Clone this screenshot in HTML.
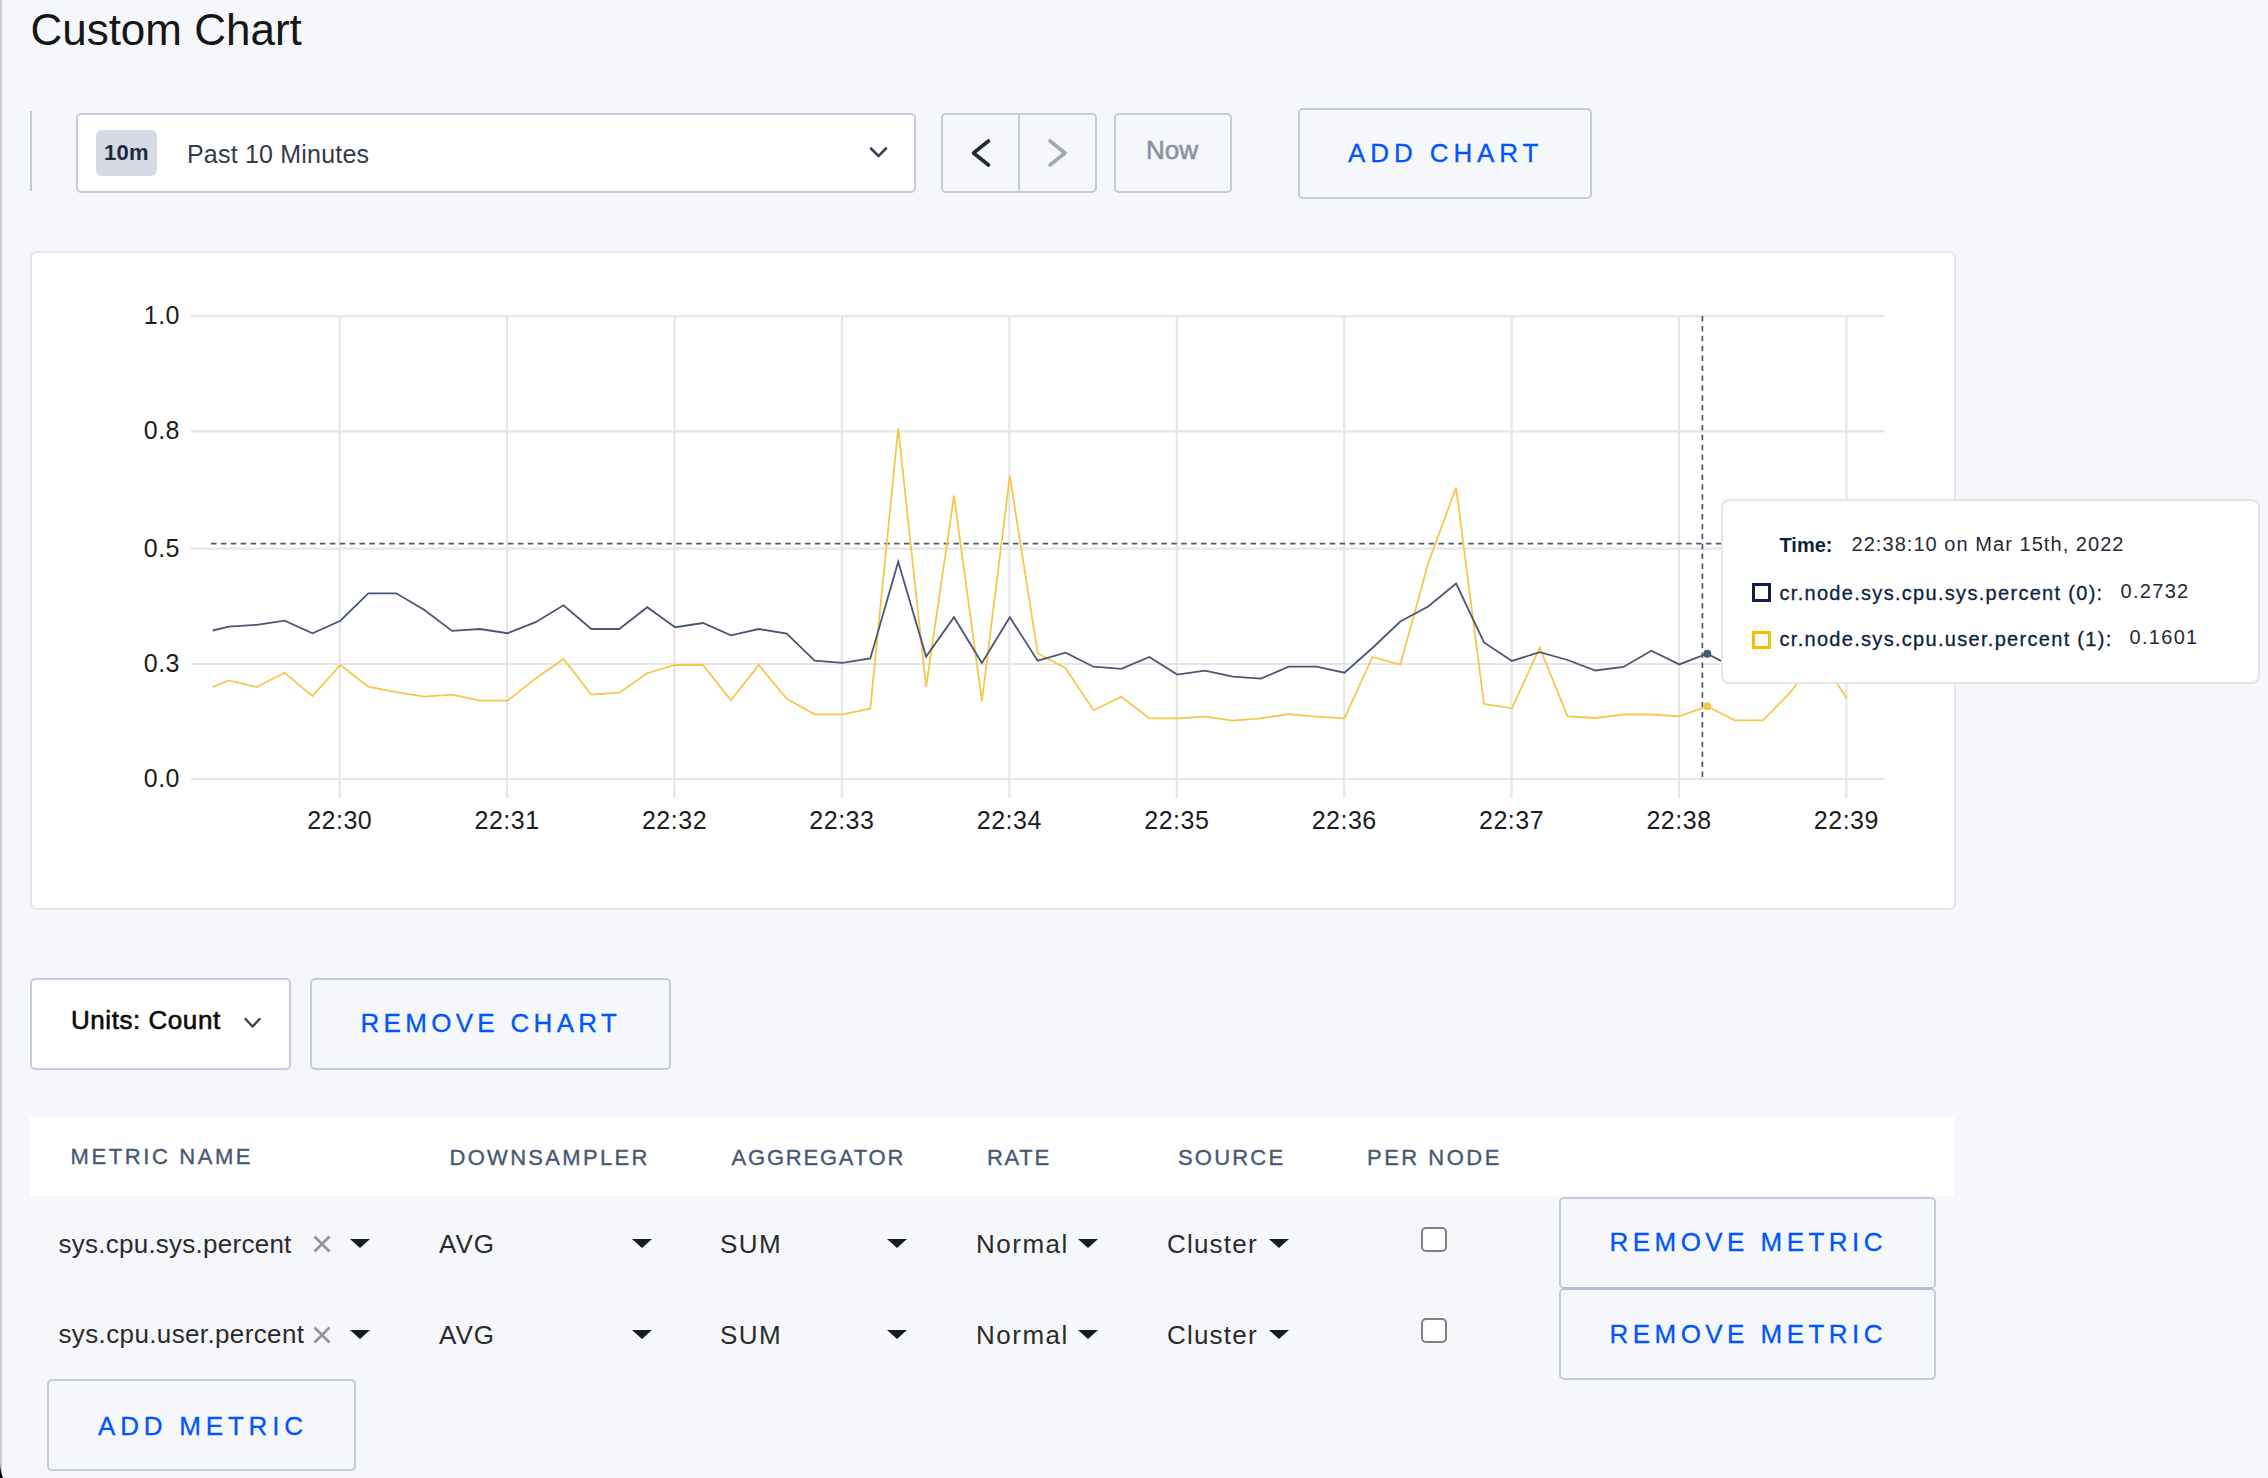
<!DOCTYPE html>
<html><head><meta charset="utf-8">
<style>
html,body{margin:0;padding:0;}
body{width:2268px;height:1478px;overflow:hidden;background:#f5f7fa;position:relative;font-family:"Liberation Sans",sans-serif;}
.a{position:absolute;box-sizing:border-box;}
.t{position:absolute;white-space:nowrap;}
.box{position:absolute;box-sizing:border-box;border:2px solid #c5cbda;border-radius:5px;}
.btxt{position:absolute;white-space:nowrap;color:#0055ff;font-size:26px;line-height:25px;-webkit-text-stroke:0.3px #0055ff;}
.ax{font-family:"Liberation Sans",sans-serif;font-size:25px;fill:#1c1c1c;letter-spacing:0.5px;}
.hd{position:absolute;white-space:nowrap;color:#475872;font-size:22px;line-height:22px;-webkit-text-stroke:0.35px #475872;}
.cell{position:absolute;white-space:nowrap;color:#2b2b2b;font-size:26px;line-height:26px;}
.tri{position:absolute;width:0;height:0;border-left:10px solid transparent;border-right:10px solid transparent;border-top:9px solid #161b27;}
.cb{position:absolute;box-sizing:border-box;width:26px;height:25px;border:2px solid #808080;border-radius:5px;background:#fff;}
</style></head>
<body>
<div class="a" style="left:0;top:0;width:1.5px;height:1478px;background:#cdd0d5;"></div>
<svg class="a" style="left:0;top:0;" width="10" height="1478"><path d="M0,1462 L0.00,1462 L0.01,1463 L0.05,1464 L0.10,1465 L0.18,1466 L0.29,1467 L0.41,1468 L0.56,1469 L0.73,1470 L0.93,1471 L1.15,1472 L1.40,1473 L1.67,1474 L1.96,1475 L2.29,1476 L2.64,1477 L3.01,1478 L0,1478 Z" fill="#000"/></svg>

<div class="t" style="left:30.4px;top:8.4px;font-size:44px;line-height:44px;color:#161616;">Custom Chart</div>

<!-- time selector -->
<div class="a" style="left:30px;top:111px;width:2px;height:80px;background:#c5cbda;"></div>
<div class="box" style="left:75.5px;top:113.4px;width:840.5px;height:79.6px;background:#fff;"></div>
<div class="a" style="left:96px;top:130px;width:61px;height:46px;background:#d6dbe5;border-radius:6px;"></div>
<div class="t" style="left:104px;top:141.9px;font-size:22px;line-height:22px;font-weight:bold;color:#1f2a3d;letter-spacing:0.3px;">10m</div>
<div class="t" style="left:187px;top:141.8px;font-size:25px;line-height:25px;color:#333b48;letter-spacing:0.2px;">Past 10 Minutes</div>

<!-- nav group -->
<div class="box" style="left:940.5px;top:113.4px;width:156.5px;height:79.6px;"></div>
<div class="a" style="left:1018px;top:113.4px;width:2px;height:79.6px;background:#c5cbda;"></div>
<div class="box" style="left:1113.5px;top:113.4px;width:118.5px;height:79.6px;"></div>
<div class="t" style="left:1146px;top:137.0px;font-size:26px;line-height:26px;color:#8a91a0;-webkit-text-stroke:0.55px #8a91a0;">Now</div>
<div class="box" style="left:1298.2px;top:107.5px;width:294px;height:91.4px;"></div>
<div class="btxt" style="left:1348px;top:141.0px;letter-spacing:4.9px;">ADD CHART</div>

<!-- chart card -->
<div class="a" style="left:30px;top:251px;width:1926px;height:659px;background:#fff;border:2px solid #e6e6e6;border-radius:7px;"></div>

<!-- controls row -->
<div class="box" style="left:29.8px;top:978px;width:261.5px;height:91.7px;background:#fff;"></div>
<div class="t" style="left:71px;top:1007.4px;font-size:26px;line-height:26px;color:#0b0b0b;-webkit-text-stroke:0.6px #0b0b0b;letter-spacing:0.55px;">Units: Count</div>
<div class="box" style="left:310.3px;top:978px;width:361px;height:91.7px;"></div>
<div class="btxt" style="left:360.5px;top:1011.2px;letter-spacing:4.3px;">REMOVE CHART</div>

<!-- table header -->
<div class="a" style="left:30px;top:1117.3px;width:1924px;height:79px;background:#fff;"></div>
<div class="hd" style="left:70.5px;top:1146.4px;letter-spacing:2.6px;">METRIC NAME</div>
<div class="hd" style="left:449.5px;top:1146.9px;letter-spacing:2.3px;">DOWNSAMPLER</div>
<div class="hd" style="left:731.5px;top:1146.9px;letter-spacing:1.8px;">AGGREGATOR</div>
<div class="hd" style="left:987px;top:1146.9px;letter-spacing:1.7px;">RATE</div>
<div class="hd" style="left:1178px;top:1146.9px;letter-spacing:2.2px;">SOURCE</div>
<div class="hd" style="left:1367px;top:1146.9px;letter-spacing:2.5px;">PER NODE</div>

<div class="cell" style="left:58.5px;top:1231.0px;letter-spacing:0.25px;">sys.cpu.sys.percent</div>
<svg class="a" style="left:311.3px;top:1234.0px;" width="22" height="20"><path d="M3.5 2.5 L18.5 17.5 M18.5 2.5 L3.5 17.5" stroke="#939393" stroke-width="2.6" fill="none"/></svg>
<div class="tri" style="left:350px;top:1238.6px;"></div>
<div class="cell" style="left:439px;top:1231.0px;letter-spacing:1px;">AVG</div>
<div class="tri" style="left:631.5px;top:1238.8px;"></div>
<div class="cell" style="left:720px;top:1231.0px;letter-spacing:1.5px;">SUM</div>
<div class="tri" style="left:886.5px;top:1238.8px;"></div>
<div class="cell" style="left:976px;top:1231.0px;letter-spacing:1.5px;">Normal</div>
<div class="tri" style="left:1077.5px;top:1238.6px;"></div>
<div class="cell" style="left:1167px;top:1231.0px;letter-spacing:1.2px;">Cluster</div>
<div class="tri" style="left:1268.5px;top:1238.6px;"></div>
<div class="cb" style="left:1421px;top:1226.6px;"></div>
<div class="box" style="left:1559px;top:1197.0px;width:377px;height:91.6px;"></div>
<div class="btxt" style="left:1609.5px;top:1230.2px;letter-spacing:4.45px;">REMOVE METRIC</div>

<div class="cell" style="left:58.5px;top:1321.1px;letter-spacing:0.37px;">sys.cpu.user.percent</div>
<svg class="a" style="left:311.3px;top:1325.3px;" width="22" height="20"><path d="M3.5 2.5 L18.5 17.5 M18.5 2.5 L3.5 17.5" stroke="#939393" stroke-width="2.6" fill="none"/></svg>
<div class="tri" style="left:350px;top:1329.9px;"></div>
<div class="cell" style="left:439px;top:1322.3px;letter-spacing:1px;">AVG</div>
<div class="tri" style="left:631.5px;top:1330.1px;"></div>
<div class="cell" style="left:720px;top:1322.3px;letter-spacing:1.5px;">SUM</div>
<div class="tri" style="left:886.5px;top:1330.1px;"></div>
<div class="cell" style="left:976px;top:1322.3px;letter-spacing:1.5px;">Normal</div>
<div class="tri" style="left:1077.5px;top:1329.9px;"></div>
<div class="cell" style="left:1167px;top:1322.3px;letter-spacing:1.2px;">Cluster</div>
<div class="tri" style="left:1268.5px;top:1329.9px;"></div>
<div class="cb" style="left:1421px;top:1317.9px;"></div>
<div class="box" style="left:1559px;top:1287.6px;width:377px;height:92.1px;"></div>
<div class="btxt" style="left:1609.5px;top:1321.5px;letter-spacing:4.45px;">REMOVE METRIC</div>

<div class="a" style="left:1563px;top:1286.6px;width:369px;height:3px;background:#b9bfd0;"></div>
<div class="box" style="left:47.3px;top:1379.3px;width:308.6px;height:91.9px;"></div>
<div class="btxt" style="left:98px;top:1413.6px;letter-spacing:4.8px;">ADD METRIC</div>

<svg class="a" style="left:0;top:0;pointer-events:none;" width="2268" height="1478">
<!-- chevrons -->
<polyline points="871,148.5 878.5,156 886,148.5" fill="none" stroke="#394455" stroke-width="2.6" stroke-linecap="round" stroke-linejoin="round"/>
<polyline points="988.5,141 973.5,153 988.5,165" fill="none" stroke="#242a35" stroke-width="3.6" stroke-linecap="round" stroke-linejoin="round"/>
<polyline points="1050,141 1065,153 1050,165" fill="none" stroke="#a3a9b3" stroke-width="3.6" stroke-linecap="round" stroke-linejoin="round"/>
<polyline points="245.5,1019 252.5,1026.5 259.5,1019" fill="none" stroke="#394455" stroke-width="2.4" stroke-linecap="round" stroke-linejoin="round"/>
<line x1="191" y1="316.2" x2="1884" y2="316.2" stroke="#e6e6e6" stroke-width="2.2"/>
<line x1="191" y1="431.4" x2="1884" y2="431.4" stroke="#e6e6e6" stroke-width="2.2"/>
<line x1="191" y1="548.6" x2="1884" y2="548.6" stroke="#e6e6e6" stroke-width="2.2"/>
<line x1="191" y1="664.0" x2="1884" y2="664.0" stroke="#e6e6e6" stroke-width="2.2"/>
<line x1="191" y1="779.0" x2="1884" y2="779.0" stroke="#e6e6e6" stroke-width="2.2"/>
<line x1="339.7" y1="316" x2="339.7" y2="798" stroke="#e6e6e6" stroke-width="2.2"/>
<line x1="507.1" y1="316" x2="507.1" y2="798" stroke="#e6e6e6" stroke-width="2.2"/>
<line x1="674.5" y1="316" x2="674.5" y2="798" stroke="#e6e6e6" stroke-width="2.2"/>
<line x1="841.9" y1="316" x2="841.9" y2="798" stroke="#e6e6e6" stroke-width="2.2"/>
<line x1="1009.3" y1="316" x2="1009.3" y2="798" stroke="#e6e6e6" stroke-width="2.2"/>
<line x1="1176.8" y1="316" x2="1176.8" y2="798" stroke="#e6e6e6" stroke-width="2.2"/>
<line x1="1344.2" y1="316" x2="1344.2" y2="798" stroke="#e6e6e6" stroke-width="2.2"/>
<line x1="1511.6" y1="316" x2="1511.6" y2="798" stroke="#e6e6e6" stroke-width="2.2"/>
<line x1="1679.0" y1="316" x2="1679.0" y2="798" stroke="#e6e6e6" stroke-width="2.2"/>
<line x1="1846.4" y1="316" x2="1846.4" y2="798" stroke="#e6e6e6" stroke-width="2.2"/>
<text x="180" y="324.2" text-anchor="end" class="ax">1.0</text>
<text x="180" y="439.4" text-anchor="end" class="ax">0.8</text>
<text x="180" y="556.6" text-anchor="end" class="ax">0.5</text>
<text x="180" y="672.0" text-anchor="end" class="ax">0.3</text>
<text x="180" y="787.0" text-anchor="end" class="ax">0.0</text>
<text x="339.7" y="828.6" text-anchor="middle" class="ax">22:30</text>
<text x="507.1" y="828.6" text-anchor="middle" class="ax">22:31</text>
<text x="674.5" y="828.6" text-anchor="middle" class="ax">22:32</text>
<text x="841.9" y="828.6" text-anchor="middle" class="ax">22:33</text>
<text x="1009.3" y="828.6" text-anchor="middle" class="ax">22:34</text>
<text x="1176.8" y="828.6" text-anchor="middle" class="ax">22:35</text>
<text x="1344.2" y="828.6" text-anchor="middle" class="ax">22:36</text>
<text x="1511.6" y="828.6" text-anchor="middle" class="ax">22:37</text>
<text x="1679.0" y="828.6" text-anchor="middle" class="ax">22:38</text>
<text x="1846.4" y="828.6" text-anchor="middle" class="ax">22:39</text>
<line x1="211" y1="543.7" x2="1884" y2="543.7" stroke="#4a5a74" stroke-width="1.7" stroke-dasharray="5.5,4.4"/>
<line x1="1702.4" y1="316" x2="1702.4" y2="779" stroke="#4a5a74" stroke-width="1.7" stroke-dasharray="5.5,4.4"/>
<polyline points="212.7,687.1 228.8,680.4 256.7,687.1 284.6,672.7 312.5,696.1 340.4,665 368.3,686.7 396.2,692.2 424.1,696.7 452.0,694.6 479.9,700.6 507.7,700.6 535.6,678.4 563.5,659 591.4,694.6 619.3,692.7 647.2,673.2 675.1,665 703.0,665 730.9,700.2 758.8,665 786.7,698.7 814.6,714.4 842.4,714.4 870.3,708.7 898.2,428.3 926.1,686.9 954.0,495.7 981.9,701.2 1009.8,476 1037.7,653.2 1065.6,668.2 1093.5,710.2 1121.4,696.7 1149.3,718.4 1177.2,718.4 1205.0,716.6 1232.9,720.7 1260.8,718.4 1288.7,714.2 1316.6,716.6 1344.5,718.4 1372.4,657 1400.3,664.7 1428.2,563.2 1456.1,487.6 1484.0,704 1511.9,708.3 1539.7,647.7 1567.6,716.3 1595.5,718 1623.4,714.5 1651.3,714.5 1679.2,716.3 1707.1,706.3 1735.0,720.3 1762.9,720.3 1790.8,692 1818.7,654 1846.6,698.3" fill="none" stroke="#f5c84c" stroke-width="1.8" stroke-linejoin="miter"/>
<polyline points="212.7,630.5 228.8,626.7 256.7,624.8 284.6,620.7 312.5,633.2 340.4,620.7 368.3,593.3 396.2,593.3 424.1,609.8 452.0,630.9 479.9,629 507.7,633.2 535.6,622.2 563.5,605.3 591.4,629 619.3,629 647.2,607.2 675.1,627.2 703.0,623 730.9,635.3 758.8,629 786.7,633.5 814.6,660.7 842.4,662.9 870.3,658.4 898.2,561.7 926.1,656.6 954.0,617.2 981.9,662.9 1009.8,617.2 1037.7,660.7 1065.6,652.7 1093.5,666.7 1121.4,668.9 1149.3,657 1177.2,674.6 1205.0,670.7 1232.9,676.7 1260.8,678.7 1288.7,666.7 1316.6,666.7 1344.5,672.7 1372.4,648 1400.3,621.5 1428.2,606.5 1456.1,583.5 1484.0,642.4 1511.9,660.9 1539.7,652.1 1567.6,660 1595.5,670.5 1623.4,667 1651.3,650.8 1679.2,664.4 1707.1,653.7 1735.0,668 1762.9,662 1790.8,658 1818.7,664 1846.6,660" fill="none" stroke="#4a5872" stroke-width="1.8" stroke-linejoin="miter"/>
<circle cx="1707.3" cy="653.7" r="4" fill="#475872"/>
<circle cx="1707.3" cy="706.3" r="4" fill="#f5c84c"/>
</svg>

<!-- tooltip -->
<div class="a" style="left:1721px;top:498.8px;width:539px;height:185.2px;background:#fff;border:2px solid #e4e4e4;border-radius:8px;"></div>
<div class="t" style="left:1779.5px;top:535.3px;font-size:20px;line-height:20px;font-weight:bold;color:#0c1f3d;">Time:</div>
<div class="t" style="left:1851.5px;top:533.5px;font-size:20px;line-height:20px;color:#242a35;letter-spacing:1.05px;">22:38:10 on Mar 15th, 2022</div>
<div class="a" style="left:1752px;top:583.4px;width:18.5px;height:18.5px;border:3px solid #0e1e45;"></div>
<div class="t" style="left:1779.5px;top:582.7px;font-size:20px;line-height:20px;color:#0c1f3d;letter-spacing:1.3px;-webkit-text-stroke:0.3px #0c1f3d;">cr.node.sys.cpu.sys.percent (0):</div>
<div class="t" style="left:2120.5px;top:581.1px;font-size:20px;line-height:20px;color:#242a35;letter-spacing:1.3px;">0.2732</div>
<div class="a" style="left:1752px;top:630.7px;width:18.5px;height:18.5px;border:3px solid #f6c000;"></div>
<div class="t" style="left:1779.5px;top:628.7px;font-size:20px;line-height:20px;color:#0c1f3d;letter-spacing:1.3px;-webkit-text-stroke:0.3px #0c1f3d;">cr.node.sys.cpu.user.percent (1):</div>
<div class="t" style="left:2129.5px;top:627.1px;font-size:20px;line-height:20px;color:#242a35;letter-spacing:1.3px;">0.1601</div>
</body></html>
